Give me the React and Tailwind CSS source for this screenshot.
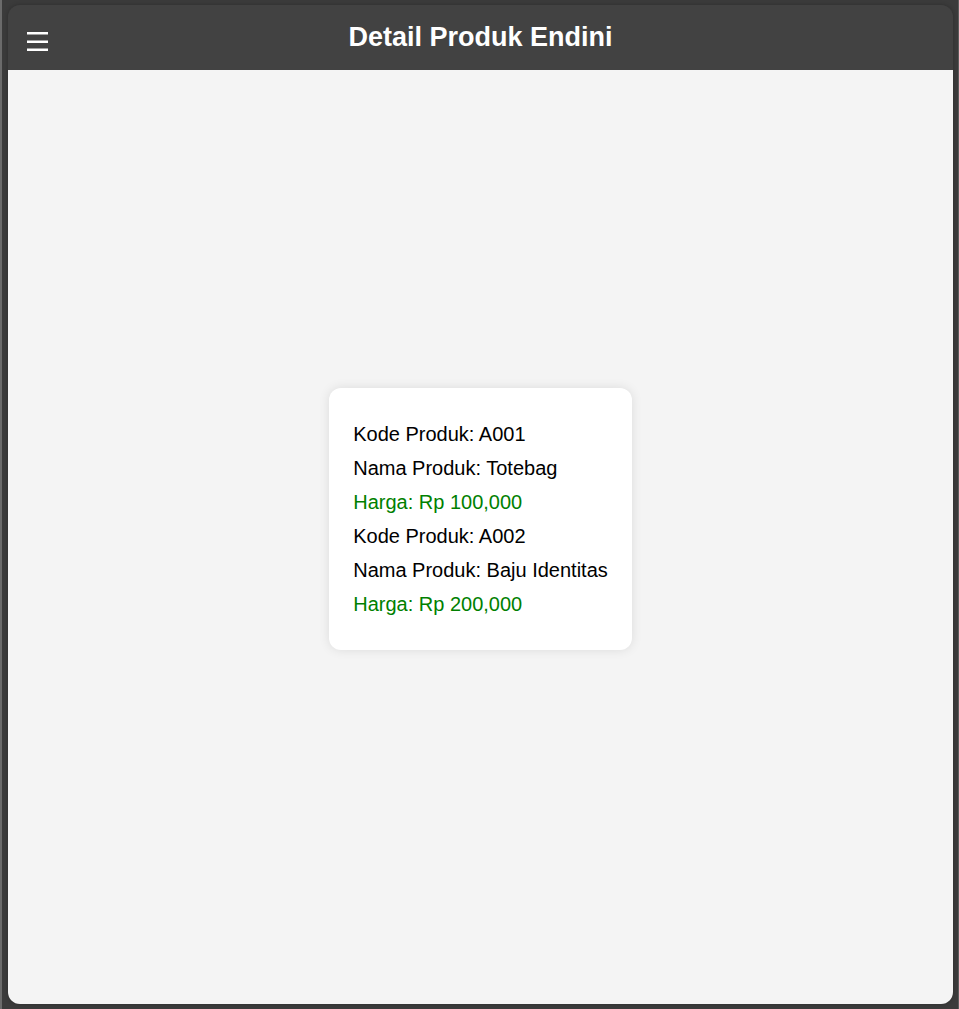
export default function App() {
  return (
    <div className="flex h-screen flex-col border-r border-l-2 border-r-[#5c5c5c] border-l-[#6b6b6b] bg-[#3b3b3b] pt-[5px] pr-[5px] pb-[5px] pl-1.5 font-['Liberation_Sans',Arial,sans-serif]">
      <div className="flex flex-1 flex-col rounded-xl shadow-[0_0_4px_rgba(0,0,0,0.25)]">
        <header className="grid h-[65px] shrink-0 grid-cols-[1fr_auto_1fr] items-center rounded-t-xl bg-[#424242] px-4 pb-0.5 text-white">
          <button type="button" aria-label="Menu" className="justify-self-start pt-2">
            <svg viewBox="0 0 26 26" className="size-[26px]" stroke="currentColor" strokeWidth="2.5">
              <path d="M3 5.25H24M3 13.75H24M3 21.75H24" />
            </svg>
          </button>
          <h1 className="text-[27px] leading-[32px] font-bold">Detail Produk Endini</h1>
        </header>
        <main className="flex flex-1 items-center justify-center rounded-b-xl bg-[#f4f4f4] pb-9">
          <section className="rounded-xl bg-white px-6 py-[29px] text-[20px] leading-[34px] text-black shadow-[0_0_11px_rgba(0,0,0,0.1)]">
            <p>Kode Produk: A001</p>
            <p>Nama Produk: Totebag</p>
            <p className="text-[#008000]">Harga: Rp 100,000</p>
            <p>Kode Produk: A002</p>
            <p>Nama Produk: Baju Identitas</p>
            <p className="text-[#008000]">Harga: Rp 200,000</p>
          </section>
        </main>
      </div>
    </div>
  );
}
